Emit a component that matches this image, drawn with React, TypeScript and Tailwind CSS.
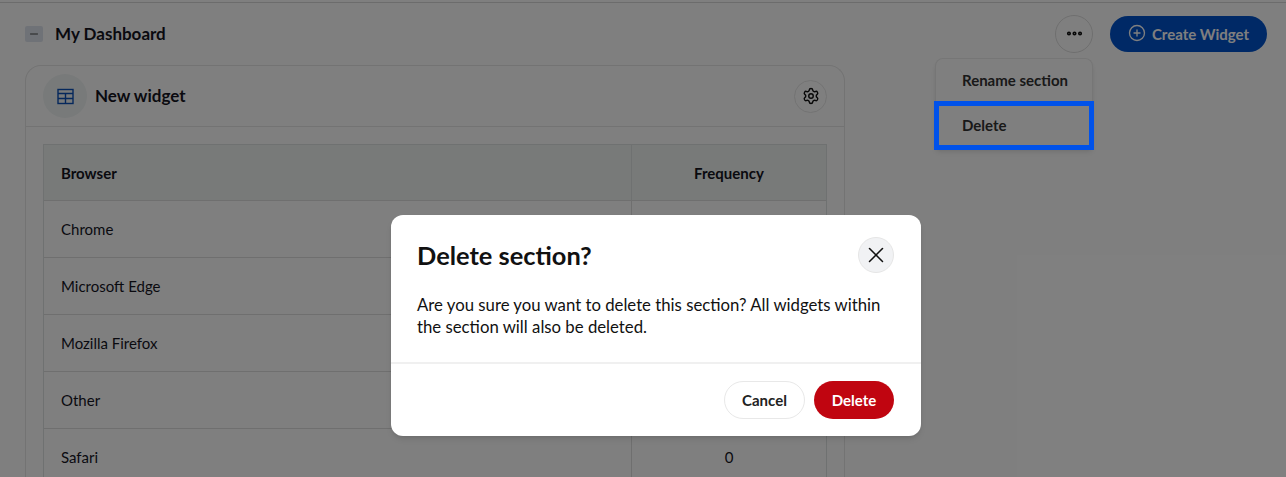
import React from "react";
import { CirclePlus, Ellipsis, Settings, X, Minus } from "lucide-react";

const rows: [string, string][] = [
  ["Chrome", "0"],
  ["Microsoft Edge", "0"],
  ["Mozilla Firefox", "0"],
  ["Other", "0"],
  ["Safari", "0"],
];

function TableIcon() {
  return (
    <svg width="17" height="17" viewBox="0 0 17 17" fill="none" stroke="#0a50b8" strokeWidth="1.4">
      <rect x="1" y="1.5" width="15" height="14" />
      <path d="M1 5.5H16M1 10.5H16M8.5 5.5V15.5" />
    </svg>
  );
}

export default function App() {
  return (
    <div className="relative h-[477px] w-[1286px] overflow-hidden bg-white font-['Lato','Liberation_Sans',sans-serif] text-[#1a1a1a]">
      <div className="h-[3px] border-b border-[#d8d8d8]" />
      <div className="flex h-[62px] items-center justify-between pl-[25px] pr-[19px] pb-[1px]">
        <div className="flex items-center gap-3">
          <div className="flex h-4 w-[18px] items-center justify-center rounded-[2px] bg-[#dfe5ee]">
            <Minus size={12} strokeWidth={1.5} color="#111" />
          </div>
          <span className="text-[17px] font-bold leading-6 text-[#15151f]">My Dashboard</span>
        </div>
        <div className="flex items-center gap-[17px]">
          <div className="flex h-[38px] w-[38px] items-center justify-center rounded-full border border-[#dedede]">
            <Ellipsis size={19} strokeWidth={3.2} color="#111" />
          </div>
          <div className="flex h-9 w-[157px] items-center justify-center gap-[6px] rounded-full bg-[#0052cc] pt-[1px] text-[15px] font-bold text-white">
            <CirclePlus size={18} strokeWidth={1.8} className="-mt-[2px]" />
            <span>Create Widget</span>
          </div>
        </div>
      </div>

      <div className="ml-[25px] w-[820px] rounded-t-2xl border border-b-0 border-[#e6e6e6]">
        <div className="flex h-[61px] items-center justify-between border-b border-[#e6e6e6] pl-[17px] pr-[17px]">
          <div className="flex items-center gap-[8px]">
            <div className="flex h-[44px] w-[44px] items-center justify-center rounded-full bg-[#f0f4f4]">
              <TableIcon />
            </div>
            <span className="text-[17px] font-bold text-[#15151f]">New widget</span>
          </div>
          <div className="flex h-[33px] w-[33px] items-center justify-center rounded-full border border-[#e6e6e6]">
            <Settings size={18} strokeWidth={1.9} color="#111" />
          </div>
        </div>
        <div className="px-[17px] pt-[17px]">
          <div className="border border-[#dfe3e2]">
            <div className="flex h-[55px] bg-[#f0f4f2] pt-[1px] text-[15px] font-bold text-[#15151f]">
              <div className="flex flex-1 items-center px-[17px]">Browser</div>
              <div className="-mt-[1px] flex w-[195px] items-center justify-center border-l border-[#dfe3e2] pt-[1px]">Frequency</div>
            </div>
            {rows.map(([name, value]) => (
              <div key={name} className="flex h-[57px] border-t border-[#dedede] text-[15px] text-[#15151f]">
                <div className="flex flex-1 items-center px-[17px]">{name}</div>
                <div className="flex w-[195px] items-center justify-center border-l border-[#dedede]">{value}</div>
              </div>
            ))}
          </div>
        </div>
      </div>

      <div className="absolute left-[935px] top-[58px] w-[158px] rounded-t-lg border border-b-0 border-[#ececec] bg-white text-[15px] font-bold text-[#333] shadow-md">
        <div className="flex h-[43px] items-center pl-[26px]">Rename section</div>
        <div className="flex h-[47px] items-center pl-[26px]">Delete</div>
      </div>

      <div className="absolute inset-0 bg-black/50" />

      <div className="absolute left-[934px] top-[101px] h-[49px] w-[160px] border-[5px] border-[#0052ea]" />

      <div className="absolute left-[391px] top-[215px] w-[530px] rounded-xl bg-white shadow-md">
        <div className="flex h-[149px] flex-col border-b-2 border-[#f0f0f0] pl-[26px] pr-[27px] pt-[22px]">
          <div className="flex items-center justify-between">
            <h2 className="text-[25.4px] font-bold leading-9 text-[#111]">Delete section?</h2>
            <div className="flex h-9 w-9 items-center justify-center rounded-full border border-[#e6e6e6] bg-[#f1f2f4]">
              <X size={26} strokeWidth={1.4} color="#111" />
            </div>
          </div>
          <p className="mt-[21px] text-[16.75px] leading-[22px] text-[#111]">
            Are you sure you want to delete this section? All widgets within the section will also be deleted.
          </p>
        </div>
        <div className="flex h-[72px] justify-end gap-[9px] pr-[27px] pt-[17px]">
          <div className="flex h-[38px] w-[81px] items-center justify-center rounded-full border border-[#e8e8e8] text-[15px] font-bold text-[#222]">
            Cancel
          </div>
          <div className="flex h-[38px] w-[80px] items-center justify-center rounded-full bg-[#c00510] text-[15px] font-bold text-white">
            Delete
          </div>
        </div>
      </div>
    </div>
  );
}
